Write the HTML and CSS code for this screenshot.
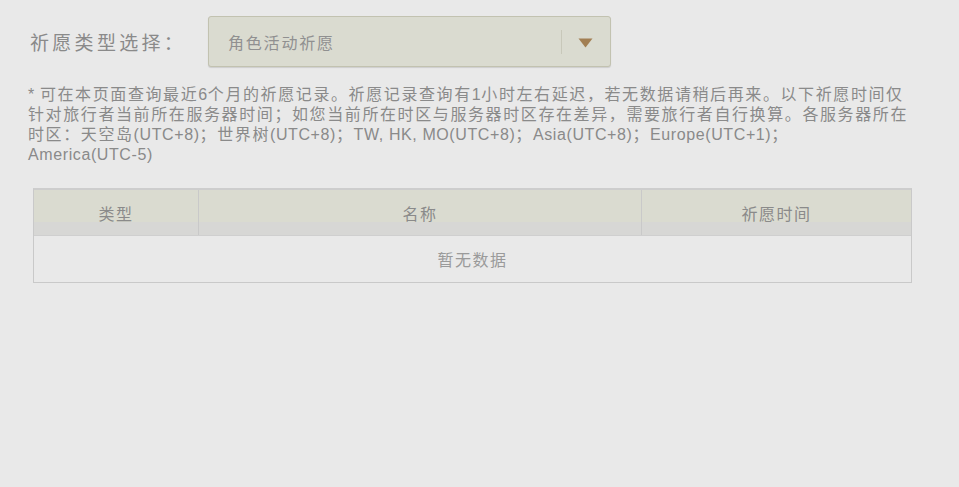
FILE: index.html
```html
<!DOCTYPE html>
<html lang="zh-CN">
<head>
<meta charset="utf-8">
<link rel="stylesheet" href="styles.css">
</head>
<body>
<div class="page">
  <div class="filter">
    <span class="filter-label">祈愿类型选择：</span>
    <div class="select">
      <span class="select-value">角色活动祈愿</span>
      <span class="select-sep"></span>
      <svg class="select-arrow" width="15" height="10" viewBox="0 0 15 10"><path d="M0.5 0.5 H14.5 L7.5 9.5 Z" fill="#a27f53"/></svg>
    </div>
  </div>
  <p class="note"><span class="lt">* </span>可在本页面查询最近<span class="lt">6</span>个月的祈愿记录。祈愿记录查询有<span class="lt">1</span>小时左右延迟，若无数据请稍后再来。以下祈愿时间仅针对旅行者当前所在服务器时间；如您当前所在时区与服务器时区存在差异，需要旅行者自行换算。各服务器所在时区：天空岛<span class="lt">(UTC+8)</span>；世界树<span class="lt">(UTC+8)</span>；<span class="lt">TW, HK, MO(UTC+8)</span>；<span class="lt">Asia(UTC+8)</span>；<span class="lt">Europe(UTC+1)</span>；<span class="lt">America(UTC-5)</span></p>
  <div class="table">
    <div class="thead">
      <div class="th">类型</div>
      <div class="th">名称</div>
      <div class="th">祈愿时间</div>
    </div>
    <div class="empty">暂无数据</div>
  </div>
</div>
</body>
</html>
```
FILE: styles.css
```css
html, body {
  margin: 0;
  padding: 0;
  background: #e9e9e9;
}
body {
  font-family: "Noto Sans CJK SC", sans-serif;
  color: #8d8d8d;
}
.page {
  padding: 16px 0 0 28px;
  width: 884px;
}
.filter {
  display: flex;
  align-items: center;
  height: 51px;
}
.filter-label {
  font-size: 19px;
  color: #8a8a8a;
  width: 180px;
  letter-spacing: 3.3px;
  padding-left: 2px;
  box-sizing: border-box;
}
.select {
  box-sizing: border-box;
  width: 403px;
  height: 51px;
  background: #dadbd0;
  border: 1px solid #c2c2b0;
  border-radius: 3px;
  box-shadow: 0 1px 1px rgba(0,0,0,0.12);
  display: flex;
  align-items: center;
  padding-left: 19px;
}
.select-value {
  flex: 1;
  font-size: 16px;
  color: #909090;
  letter-spacing: 1.8px;
}
.select-sep {
  width: 1px;
  height: 24px;
  background: #c8c8ba;
  margin-right: 16px;
}
.select-arrow {
  margin-right: 17px;
  margin-top: 2px;
}
.note {
  margin: 16px 0 0 0;
  width: 884px;
  font-family: "Noto Sans CJK SC", sans-serif;
  font-size: 16px;
  line-height: 20px;
  color: #8a8a8a;
  letter-spacing: 1.6px;
}
.lt {
  font-family: "Liberation Sans", Arial, sans-serif;
  letter-spacing: 0.6px;
  line-height: 1;
  white-space: nowrap;
}
.table {
  margin: 25px 0 0 5px;
  width: 879px;
  box-sizing: border-box;
  border: 1px solid #c9c9c9;
  border-top: 2px solid #cdcdcd;
}
.thead {
  display: grid;
  grid-template-columns: 164px 443px 1fr;
  height: 45px;
  border-bottom: 1px solid #cfcfcf;
}
.th {
  display: flex;
  align-items: center;
  justify-content: center;
  font-size: 16px;
  color: #8a8a8a;
  letter-spacing: 1.5px;
  background: linear-gradient(#dadbd0 0, #dadbd0 72%, #d7d7d5 72%, #d7d7d5 100%);
}
.th + .th {
  border-left: 1px solid #c9c9c9;
}
.empty {
  height: 46px;
  display: flex;
  align-items: center;
  justify-content: center;
  font-size: 16px;
  color: #9a9a9a;
  letter-spacing: 1.5px;
  background: #e9e9e9;
}
```
